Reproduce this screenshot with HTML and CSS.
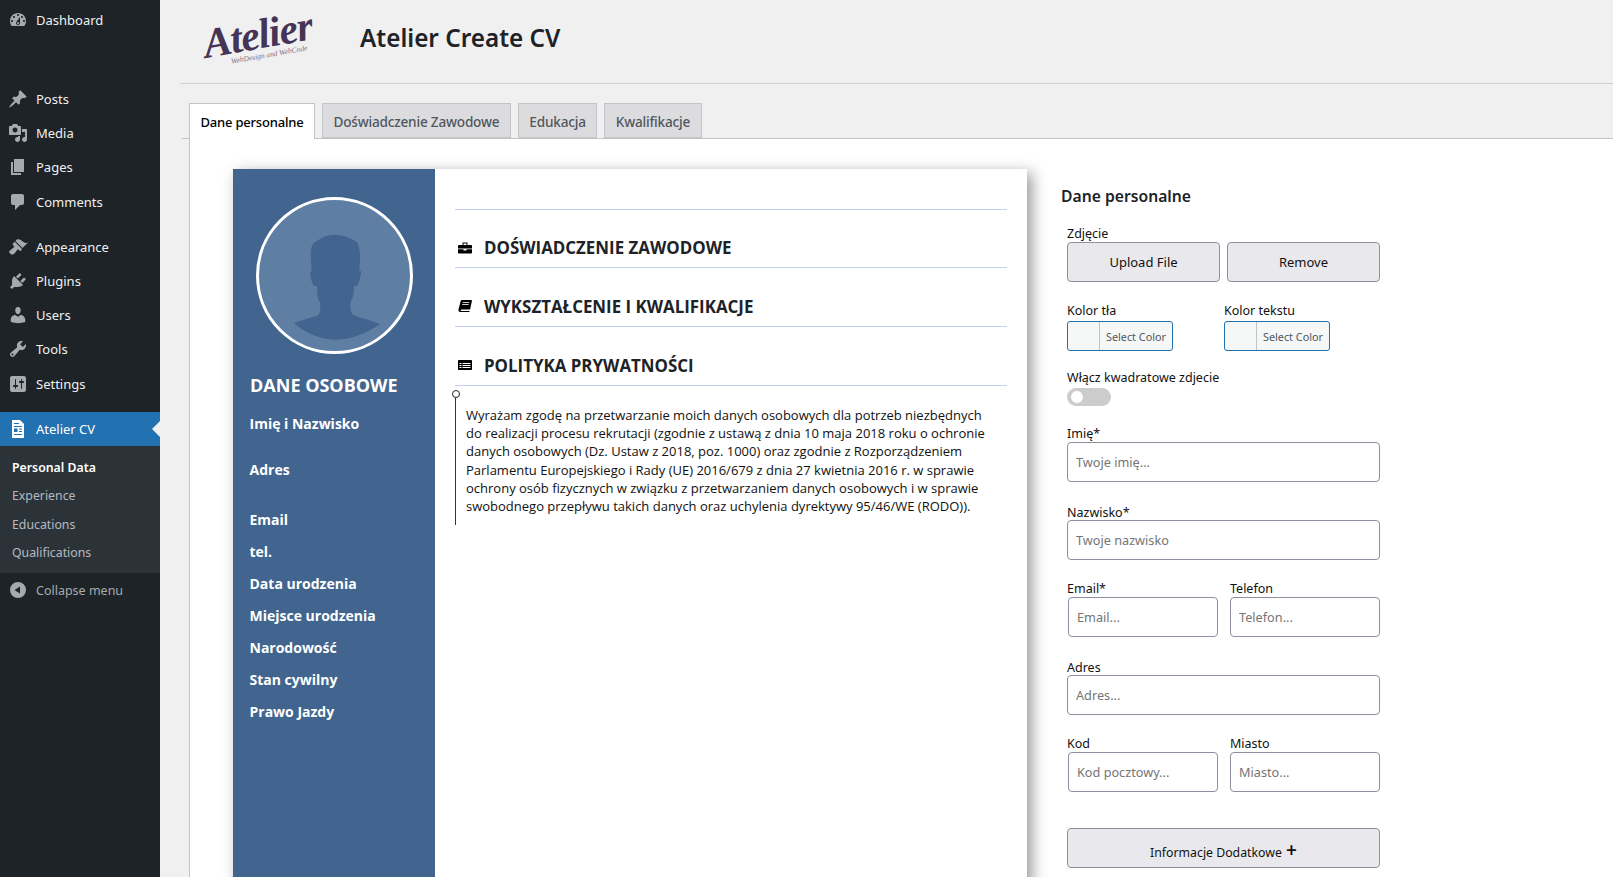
FILE: index.html
```html
<!DOCTYPE html>
<html lang="pl">
<head>
<meta charset="UTF-8">
<meta name="viewport" content="width=device-width, initial-scale=1.0">
<title>Atelier Create CV</title>
<link rel="stylesheet" href="styles.css">
</head>
<body>
<div class="wrap">
    <nav class="sidebar">
        <ul class="menu">
            <li class="menu-item"><svg class="menu-icon" viewBox="0 0 20 20"><path d="M3.76 16h12.48c1.1-1.37 1.76-3.11 1.76-5 0-4.42-3.58-8-8-8s-8 3.58-8 8c0 1.89.66 3.63 1.76 5zM10 4c.55 0 1 .45 1 1s-.45 1-1 1-1-.45-1-1 .45-1 1-1zM6 6c.55 0 1 .45 1 1s-.45 1-1 1-1-.45-1-1 .45-1 1-1zm8 0c.55 0 1 .45 1 1s-.45 1-1 1-1-.45-1-1 .45-1 1-1zm-5.37 5.55L12 7v6c0 1.1-.9 2-2 2s-2-.9-2-2c0-.57.24-1.08.63-1.45zM4 10c.55 0 1 .45 1 1s-.45 1-1 1-1-.45-1-1 .45-1 1-1zm12 0c.55 0 1 .45 1 1s-.45 1-1 1-1-.45-1-1 .45-1 1-1zm-5 3c0-.55-.45-1-1-1s-1 .45-1 1 .45 1 1 1 1-.45 1-1z" fill-rule="evenodd"/></svg>Dashboard</li>
        </ul>
        <ul class="menu menu-posts">
            <li class="menu-item"><svg class="menu-icon" viewBox="0 0 20 20"><path d="M10.44 3.02l1.82-1.82 6.36 6.35-1.83 1.82c-1.05-.68-2.48-.57-3.41.36l-.75.75c-.92.93-1.04 2.35-.35 3.41l-1.83 1.82-2.41-2.41-2.8 2.79c-.42.42-3.38 2.71-3.8 2.29s1.86-3.39 2.28-3.81l2.79-2.79L4.1 9.36l1.83-1.82c1.05.69 2.48.57 3.4-.36l.75-.75c.93-.92 1.05-2.35.36-3.41z"/></svg>Posts</li>
            <li class="menu-item"><svg class="menu-icon" viewBox="0 0 20 20"><path d="M13 11V4c0-.55-.45-1-1-1h-1.67L9 1H5L3.67 3H2c-.55 0-1 .45-1 1v7c0 .55.45 1 1 1h10c.55 0 1-.45 1-1zM7 4.5c1.38 0 2.5 1.12 2.5 2.5S8.38 9.5 7 9.5 4.5 8.38 4.5 7 5.62 4.5 7 4.5zM14 6h5v10.5c0 1.38-1.12 2.5-2.5 2.5S14 17.88 14 16.5s1.12-2.5 2.5-2.5c.17 0 .34.02.5.05V9h-3V6zm-4 8.05V13h2v3.5c0 1.38-1.12 2.5-2.5 2.5S7 17.88 7 16.5 8.12 14 9.5 14c.17 0 .34.02.5.05z" fill-rule="evenodd"/></svg>Media</li>
            <li class="menu-item"><svg class="menu-icon" viewBox="0 0 20 20"><path d="M6 15V2h10v13H6zm-1 1h8v2H3V5h2v11z"/></svg>Pages</li>
            <li class="menu-item"><svg class="menu-icon" viewBox="0 0 20 20"><path d="M5 2h9c1.1 0 2 .9 2 2v7c0 1.1-.9 2-2 2h-2l-5 5v-5H5c-1.1 0-2-.9-2-2V4c0-1.1.9-2 2-2z"/></svg>Comments</li>
        </ul>
        <ul class="menu menu-appearance">
            <li class="menu-item"><svg class="menu-icon" viewBox="0 0 20 20"><path d="M14.48 11.06L7.41 3.99l1.5-1.5c.5-.56 2.3-.47 3.51.32 1.21.8 1.43 1.28 2.91 2.1 1.18.64 2.45 1.26 4.45.85zm-.71.71L6.7 4.7 4.93 6.47c-.39.39-.39 1.02 0 1.41l1.06 1.06c.39.39.39 1.03 0 1.42-.6.6-1.43 1.11-2.21 1.69-.35.26-.7.53-1.01.84C1.43 13.23.76 14.7 1.37 15.6c.1.15.22.3.36.44l.99.99c.14.14.29.26.44.36.9.61 2.37-.06 3.71-1.4.31-.31.58-.66.84-1.01.58-.78 1.09-1.61 1.69-2.21.39-.39 1.03-.39 1.42 0l1.06 1.06c.39.39 1.02.39 1.41 0z"/></svg>Appearance</li>
            <li class="menu-item"><svg class="menu-icon" viewBox="0 0 20 20"><path d="M13.11 4.36L9.87 7.6 8 5.73l3.24-3.24c.35-.34 1.05-.2 1.56.32.52.51.66 1.21.31 1.55zm-8 1.77l.91-1.12 9.01 9.01-1.19.84c-.71.71-2.63 1.16-3.82 1.16H6.14L4.9 17.26c-.59.59-1.54.59-2.12 0-.59-.58-.59-1.53 0-2.12l1.24-1.24v-3.88c0-1.13.4-3.19 1.09-3.89zm7.26 3.97l3.24-3.24c.34-.35 1.04-.21 1.55.31.52.51.66 1.21.31 1.55l-3.24 3.25z"/></svg>Plugins</li>
            <li class="menu-item"><svg class="menu-icon" viewBox="0 0 20 20"><path d="M10 9.25c-2.27 0-2.73-3.44-2.73-3.44C7 4.02 7.82 2 9.97 2c2.16 0 2.98 2.02 2.71 3.81 0 0-.41 3.44-2.68 3.44zm0 2.57L12.72 10c2.39 0 4.52 2.33 4.52 4.53v2.49s-3.65 1.13-7.24 1.13c-3.65 0-7.24-1.13-7.24-1.13v-2.49c0-2.25 1.94-4.48 4.47-4.48z"/></svg>Users</li>
            <li class="menu-item"><svg class="menu-icon" viewBox="0 0 20 20"><path d="M16.68 9.77c-1.34 1.34-3.3 1.67-4.95.99l-5.41 6.52c-.99.99-2.59.99-3.58 0s-.99-2.59 0-3.57l6.52-5.42c-.68-1.65-.35-3.61.99-4.95 1.28-1.28 3.12-1.62 4.72-1.06l-2.89 2.89 2.82 2.82 2.86-2.87c.53 1.58.18 3.39-1.08 4.65zM3.81 16.21c.4.39 1.04.39 1.43 0 .4-.4.4-1.04 0-1.43-.39-.4-1.03-.4-1.43 0-.39.39-.39 1.03 0 1.43z" fill-rule="evenodd"/></svg>Tools</li>
            <li class="menu-item"><svg class="menu-icon" viewBox="0 0 20 20"><path d="M18 16V4c0-1.1-.9-2-2-2H4c-1.1 0-2 .9-2 2v12c0 1.1.9 2 2 2h12c1.1 0 2-.9 2-2zM8 11h1c.55 0 1 .45 1 1s-.45 1-1 1H8v1.5c0 .28-.22.5-.5.5s-.5-.22-.5-.5V13H6c-.55 0-1-.45-1-1s.45-1 1-1h1V5.5c0-.28.22-.5.5-.5s.5.22.5.5V11zm5-2h-1c-.55 0-1-.45-1-1s.45-1 1-1h1V5.5c0-.28.22-.5.5-.5s.5.22.5.5V7h1c.55 0 1 .45 1 1s-.45 1-1 1h-1v5.5c0 .28-.22.5-.5.5s-.5-.22-.5-.5V9z" fill-rule="evenodd"/></svg>Settings</li>
        </ul>
        <div class="menu-current"><svg class="menu-icon" viewBox="0 0 20 20"><path d="M4 1h8l4 4v14H4z" fill="#fff"/><path d="M6 4h5v1H6zM6 7h8v1H6zM6 9.5h3.5V13H6zM11 9.5h3v1h-3zM11 12h3v1h-3zM6 15h8v1H6z" fill="#2271b1"/></svg>Atelier CV</div>
        <ul class="submenu">
            <li class="submenu-active">Personal Data</li>
            <li>Experience</li>
            <li>Educations</li>
            <li>Qualifications</li>
        </ul>
        <div class="collapse"><svg class="menu-icon" viewBox="0 0 20 20"><path d="M10 2a8 8 0 1 0 0 16 8 8 0 0 0 0-16zm2 4.5v7L6.5 10z" fill-rule="evenodd"/></svg>Collapse menu</div>
    </nav>

    <main class="main">
        <header class="page-header">
            <div class="logo">
                <span class="logo-name">Atelier</span>
                <span class="logo-sub">WebDesign and WebCode</span>
            </div>
            <h1>Atelier Create CV</h1>
        </header>

        <div class="tabs">
            <div class="tab tab-active">Dane personalne</div>
            <div class="tab">Doświadczenie Zawodowe</div>
            <div class="tab">Edukacja</div>
            <div class="tab">Kwalifikacje</div>
        </div>

        <div class="panel">
            <section class="cv">
                <aside class="cv-side">
                    <div class="avatar">
                        <svg viewBox="0 0 470 470"><path d="M235 108C205 108 190 122 172 132C162 140 160 160 162 190L164 222L159 224C160 240 165 262 172 268L180 268C182 290 180 305 190 320C192 345 190 360 175 362C150 370 130 375 108 384C150 418 195 435 238 435C285 435 335 415 378 386C350 375 320 368 300 360C285 355 283 340 285 318C295 300 296 285 296 268L304 268C312 258 316 240 318 222L312 220C316 190 316 150 306 132C290 120 265 108 235 108Z"/></svg>
                    </div>
                    <h2>DANE OSOBOWE</h2>
                    <div class="info info-name">Imię i Nazwisko</div>
                    <div class="info info-address">Adres</div>
                    <div class="info">Email</div>
                    <div class="info">tel.</div>
                    <div class="info">Data urodzenia</div>
                    <div class="info">Miejsce urodzenia</div>
                    <div class="info">Narodowość</div>
                    <div class="info">Stan cywilny</div>
                    <div class="info">Prawo Jazdy</div>
                </aside>
                <div class="cv-body">
                    <div class="cv-rule"></div>
                    <h3 class="cv-head cv-head-first"><svg class="cv-icon" viewBox="0 0 14 14"><path d="M4.500 1.500h5V4h3.700c.4 0 .8.400.8.800V7.500H0V4.800C0 4.400.4 4 .8 4h3.700zM5.500 2.500V4h3V2.500zM0 8.300h5.500v1.200h3V8.300H14v3.400c0 .4-.4.800-.8.800H.8c-.4 0-.8-.4-.8-.8z" fill-rule="evenodd"/></svg>DOŚWIADCZENIE ZAWODOWE</h3>
                    <h3 class="cv-head"><svg class="cv-icon" viewBox="0 0 14 14"><path d="M4 1h9.200c.5 0 .8.400.7.900l-1.700 8.100c-.1.400-.4.600-.8.600H3.300c-.8 0-1 1.400 0 1.400h8.300l-.2 1H2.300C.8 13 .2 11.900.5 10.600L2.700 2c.2-.6.700-1 1.300-1z"/><path d="M4.700 3.500h6.500M4.200 5.500h6.500" stroke="#fff" stroke-width=".8" fill="none"/></svg>WYKSZTAŁCENIE I KWALIFIKACJE</h3>
                    <h3 class="cv-head"><svg class="cv-icon" viewBox="0 0 14 14"><path d="M.8 2h12.400c.4 0 .8.400.8.800v8.400c0 .4-.4.800-.8.800H.8c-.4 0-.8-.4-.8-.8V2.800C0 2.400.4 2 .8 2zM1.500 5v1.100h2V5zM4.500 5v1.100h8V5zM1.500 7v1.100h2V7zM4.500 7v1.100h8V7zM1.500 9v1.100h2V9zM4.500 9v1.100h8V9z" fill-rule="evenodd"/></svg>POLITYKA PRYWATNOŚCI</h3>
                    <p class="policy">Wyrażam zgodę na przetwarzanie moich danych osobowych dla potrzeb niezbędnych do realizacji procesu rekrutacji (zgodnie z ustawą z dnia 10 maja 2018 roku o ochronie danych osobowych (Dz. Ustaw z 2018, poz. 1000) oraz zgodnie z Rozporządzeniem Parlamentu Europejskiego i Rady (UE) 2016/679 z dnia 27 kwietnia 2016 r. w sprawie ochrony osób fizycznych w związku z przetwarzaniem danych osobowych i w sprawie swobodnego przepływu takich danych oraz uchylenia dyrektywy 95/46/WE (RODO)).</p>
                </div>
            </section>

            <form class="form">
                <h4>Dane personalne</h4>
                <div class="group group-photo">
                    <label>Zdjęcie</label>
                    <div class="two-col">
                        <button type="button" class="btn">Upload File</button>
                        <button type="button" class="btn">Remove</button>
                    </div>
                </div>
                <div class="group group-colors">
                    <div class="color-field">
                        <label>Kolor tła</label>
                        <div class="picker"><span class="swatch"></span><span class="picker-text">Select Color</span></div>
                    </div>
                    <div class="color-field">
                        <label>Kolor tekstu</label>
                        <div class="picker"><span class="swatch"></span><span class="picker-text">Select Color</span></div>
                    </div>
                </div>
                <div class="group group-toggle">
                    <label>Włącz kwadratowe zdjecie</label>
                    <div class="toggle"><span class="knob"></span></div>
                </div>
                <div class="group group-first">
                    <label>Imię*</label>
                    <input type="text" placeholder="Twoje imię...">
                </div>
                <div class="group group-name">
                    <label>Nazwisko*</label>
                    <input type="text" placeholder="Twoje nazwisko">
                </div>
                <div class="group group-email split">
                    <div><label>Email*</label><input class="input-left" type="text" placeholder="Email..."></div>
                    <div><label>Telefon</label><input type="text" placeholder="Telefon..."></div>
                </div>
                <div class="group group-address">
                    <label>Adres</label>
                    <input type="text" placeholder="Adres...">
                </div>
                <div class="group group-code split">
                    <div><label>Kod</label><input class="input-left" type="text" placeholder="Kod pocztowy..."></div>
                    <div><label>Miasto</label><input type="text" placeholder="Miasto..."></div>
                </div>
                <button type="button" class="btn btn-more">Informacje Dodatkowe <span class="plus">+</span></button>
            </form>
        </div>
    </main>
</div>
</body>
</html>
```

FILE: styles.css
```css
html, body {
    height: 100%;
}
body {
    margin: 0;
    overflow: hidden;
    background-color: #f0f0f1;
    font-family: "Noto Sans", Arial, sans-serif;
    color: #1d2327;
}
ul {
    list-style: none;
    margin: 0;
    padding: 0;
}
.wrap {
    display: flex;
    height: 877px;
    overflow: hidden;
}

/* admin menu */
.sidebar {
    width: 160px;
    flex-shrink: 0;
    background-color: #1d2327;
    color: #f0f0f1;
    font-size: 13px;
    padding-top: 3px;
}
.menu-posts {
    margin-top: 45px;
}
.menu-appearance {
    margin-top: 11px;
}
.menu-item, .menu-current, .collapse {
    display: flex;
    align-items: center;
    height: 34px;
}
.menu-posts .menu-item:last-child, .menu-appearance .menu-item:last-child {
    margin-top: 1px;
}
.menu-icon {
    width: 20px;
    height: 20px;
    margin: 0 8px 0 8px;
    fill: #a7aaad;
    flex-shrink: 0;
}
.menu-current {
    position: relative;
    margin-top: 11px;
    background-color: #2271b1;
    color: #fff;
}
.menu-current::after {
    content: "";
    position: absolute;
    right: 0;
    top: 9px;
    border: 8px solid transparent;
    border-right-color: #f0f0f1;
    border-left-width: 0;
}
.submenu {
    background-color: #2c3338;
    padding: 8px 0 6px;
    font-size: 12.300px;
    color: rgba(240, 246, 252, 0.7);
}
.submenu li {
    height: 28.300px;
    line-height: 28px;
    padding-left: 12px;
}
.submenu-active {
    color: #fff;
    font-weight: 600;
}
.collapse {
    color: #a7aaad;
    font-size: 12.500px;
}

/* page */
.main {
    flex: 1;
    min-width: 0;
    padding-left: 20px;
}
.page-header {
    display: flex;
    align-items: center;
    height: 84px;
    border-bottom: 1px solid #d0d0d2;
    box-sizing: border-box;
}
.logo {
    width: 116px;
    height: 62px;
    margin: -2px 0 0 24px;
    color: #453455;
    transform: rotate(-10deg);
}
.logo-name {
    display: block;
    font-family: "Liberation Serif", serif;
    font-style: italic;
    font-weight: 700;
    font-size: 42px;
    line-height: 48px;
    letter-spacing: -1px;
}
.logo-sub {
    display: block;
    margin: -7px 0 0 24px;
    font-family: "Liberation Serif", serif;
    font-style: italic;
    font-size: 7.500px;
    line-height: 10px;
    color: #7d6f8b;
    white-space: nowrap;
}
h1 {
    margin: 0 0 8px 40px;
    font-size: 24.300px;
    font-weight: 600;
    color: #1d2327;
}
.tabs {
    display: flex;
    margin: 19px 0 0 2px;
    padding-left: 7px;
    height: 35px;
    border-bottom: 1px solid #c3c4c7;
}
.tab {
    height: 35px;
    box-sizing: border-box;
    line-height: 36px;
    padding: 0 10.500px;
    margin-right: 7px;
    font-size: 13.600px;
    letter-spacing: -0.200px;
    font-weight: 500;
    color: #50575e;
    background-color: #dcdcde;
    border: 1px solid #c3c4c7;
    white-space: nowrap;
}
.tab-active {
    height: 36px;
    font-size: 13px;
    background-color: #fff;
    color: #000;
    border-bottom: 0;
}
.panel {
    display: flex;
    align-items: flex-start;
    margin-left: 9px;
    padding: 30px 0 0 43px;
    height: 760px;
    background-color: #fff;
    border-left: 1px solid #c3c4c7;
}

/* cv preview */
.cv {
    display: flex;
    width: 794px;
    height: 1123px;
    flex-shrink: 0;
    box-shadow: 5px 4px 14px rgba(0, 0, 0, 0.4);
    font-family: "Open Sans", Arial, sans-serif;
}
.cv-side {
    width: 202px;
    flex-shrink: 0;
    box-sizing: border-box;
    padding: 28px 0 0 17px;
    background-color: #41658f;
    color: #fff;
}
.avatar {
    width: 151px;
    height: 151px;
    margin-left: 6px;
    border: 3px solid #fff;
    border-radius: 50%;
    background-color: #5f7ea3;
    overflow: hidden;
}
.avatar svg {
    display: block;
    width: 100%;
    height: 100%;
    fill: #41658f;
}
.cv-side h2 {
    margin: 19px 0 0;
    font-size: 18px;
    line-height: 24px;
    font-weight: 700;
}
.info {
    margin: 12px 0 0 -0.500px;
    font-size: 14px;
    line-height: 20px;
    font-weight: 700;
}
.info-name {
    margin-top: 17px;
    padding-bottom: 14px;
}
.info-address {
    padding-bottom: 18px;
}
.cv-body {
    flex: 1;
    padding: 40px 20px 0;
}
.cv-rule {
    border-bottom: 1px solid #c5cff0;
}
.cv-head {
    display: flex;
    align-items: center;
    height: 59px;
    box-sizing: border-box;
    margin: 0;
    padding-top: 18px;
    border-bottom: 1px solid #c5cff0;
    font-size: 16.900px;
    font-weight: 700;
    color: #1d2327;
}
.cv-head-first {
    height: 58px;
}
.cv-icon {
    width: 14px;
    height: 14px;
    margin: 0 12px 0 3px;
    fill: #000;
    flex-shrink: 0;
}
.policy {
    position: relative;
    margin: 7px 0 0;
    padding: 13px 12px 10px 10px;
    border-left: 1.500px solid #333;
    font-size: 13px;
    line-height: 18.200px;
    color: #111;
}
.policy::before {
    content: "";
    position: absolute;
    left: -4px;
    top: -3px;
    width: 6px;
    height: 6px;
    border: 1.500px solid #222;
    border-radius: 50%;
    background-color: #fff;
}

/* form */
.form {
    width: 319px;
    flex-shrink: 0;
    margin: 15px 0 0 34px;
    font-size: 12.500px;
}
.form h4 {
    margin: 0;
    font-size: 15.700px;
    line-height: 24px;
    font-weight: 600;
    color: #1d2327;
}
.group {
    margin-left: 6px;
    width: 313px;
}
.group label {
    display: block;
    height: 18px;
    line-height: 20px;
    color: #111;
}
.group-photo {
    margin-top: 16px;
}
.group-colors {
    display: flex;
    gap: 51px;
    margin-top: 19px;
}
.color-field label {
    margin-bottom: 2px;
}
.group-toggle {
    margin-top: 17px;
}
.group-first {
    margin-top: 18px;
}
.group-name {
    margin-top: 20px;
}
.group-email {
    margin-top: 19px;
}
.group-address {
    margin-top: 20px;
}
.group-name label, .group-address label {
    line-height: 22px;
}
.group-code {
    margin-top: 19px;
}
.two-col {
    display: grid;
    grid-template-columns: 153px 153px;
    gap: 7px;
}
.split {
    display: grid;
    grid-template-columns: 151px 150px;
    gap: 12px;
}
.btn {
    height: 40px;
    box-sizing: border-box;
    border: 1px solid #8f8f9d;
    border-radius: 4px;
    background-color: #e9e9ed;
    font-family: "Noto Sans", Arial, sans-serif;
    font-size: 13px;
    color: #111;
}
.btn-more {
    display: block;
    width: 313px;
    margin: 36px 0 0 6px;
    padding-top: 10px;
    font-size: 12.300px;
}
.plus {
    font-size: 19px;
    font-weight: 600;
    line-height: 10px;
    margin-left: 1px;
}
.picker {
    display: flex;
    width: 106px;
    height: 30px;
    box-sizing: border-box;
    border: 1px solid #2271b1;
    border-radius: 3px;
    background-color: #f6f7f7;
}
.swatch {
    width: 31px;
    border-right: 1px solid #c3c4c7;
}
.picker-text {
    flex: 1;
    text-align: center;
    font-size: 10.800px;
    line-height: 29px;
    color: #50575e;
}
.toggle {
    width: 44px;
    height: 18px;
    margin-top: 2px;
    display: flex;
    align-items: center;
    padding-left: 4px;
    box-sizing: border-box;
    border-radius: 9px;
    background-color: #ccc;
}
.knob {
    width: 12px;
    height: 12px;
    border-radius: 50%;
    background-color: #fff;
}
input[type="text"] {
    display: block;
    width: 100%;
    height: 40px;
    box-sizing: border-box;
    padding: 0 8px;
    border: 1px solid #8f8f9d;
    border-radius: 4px;
    background-color: #fff;
    font-family: "Noto Sans", Arial, sans-serif;
    font-size: 12.700px;
}
input[type="text"]::placeholder {
    color: #757575;
    opacity: 1;
}
.split .input-left {
    width: 150px;
    margin-left: 1px;
}
```
